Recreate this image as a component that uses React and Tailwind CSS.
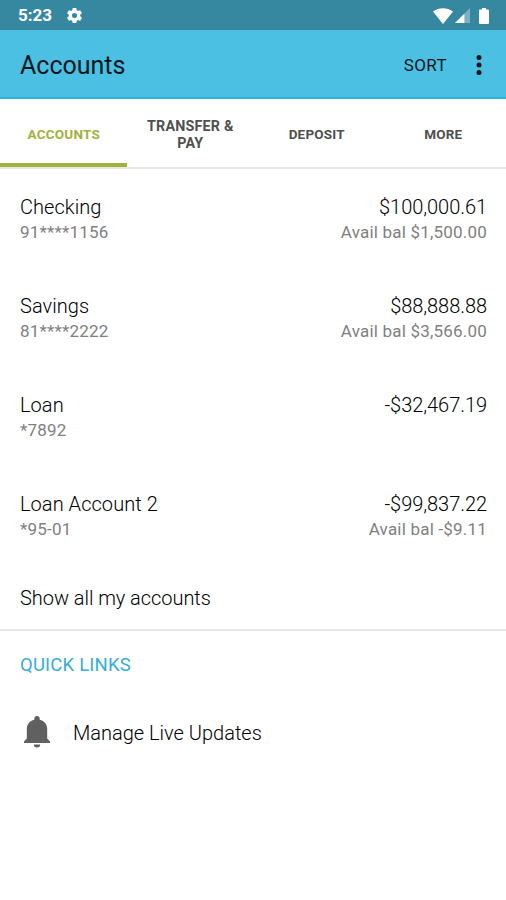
const tabs = [
  { label: 'ACCOUNTS', active: true },
  { label: 'TRANSFER & PAY' },
  { label: 'DEPOSIT' },
  { label: 'MORE' },
]

const accounts = [
  { name: 'Checking', number: '91****1156', balance: '$100,000.61', avail: 'Avail bal $1,500.00' },
  { name: 'Savings', number: '81****2222', balance: '$88,888.88', avail: 'Avail bal $3,566.00' },
  { name: 'Loan', number: '*7892', balance: '-$32,467.19' },
  { name: 'Loan Account 2', number: '*95-01', balance: '-$99,837.22', avail: 'Avail bal -$9.11' },
]

function StatusBar() {
  return (
    <div className="flex h-[30px] items-center bg-[#35889f] pl-[18px] pr-[17px] pt-px text-white">
      <span className="text-[17px] font-bold leading-none">5:23</span>
      <svg viewBox="0 0 24 24" className="ml-[13px] size-[19px]" fill="currentColor">
        <path d="M19.14 12.94c.04-.3.06-.61.06-.94 0-.32-.02-.64-.07-.94l2.03-1.58a.49.49 0 0 0 .12-.61l-1.92-3.32a.49.49 0 0 0-.59-.22l-2.39.96c-.5-.38-1.03-.7-1.62-.94l-.36-2.54a.48.48 0 0 0-.48-.41h-3.84c-.24 0-.43.17-.47.41l-.36 2.54c-.59.24-1.13.57-1.62.94l-2.39-.96a.48.48 0 0 0-.59.22L2.74 8.87a.48.48 0 0 0 .12.61l2.03 1.58c-.05.3-.09.63-.09.94s.02.64.07.94l-2.03 1.58a.49.49 0 0 0-.12.61l1.92 3.32c.12.22.37.29.59.22l2.39-.96c.5.38 1.03.7 1.62.94l.36 2.54c.05.24.24.41.48.41h3.84c.24 0 .44-.17.47-.41l.36-2.54c.59-.24 1.13-.56 1.62-.94l2.39.96c.22.08.47 0 .59-.22l1.92-3.32a.48.48 0 0 0-.12-.61l-2.01-1.58zM12 15.2a3.2 3.2 0 1 1 0-6.4 3.2 3.2 0 0 1 0 6.4z" />
      </svg>
      <svg viewBox="0 0 20 16" className="ml-auto h-4 w-5" fill="currentColor">
        <path d="M0 3.5C5.5-1 14.5-1 20 3.5L10 16z" />
      </svg>
      <svg viewBox="0 0 16 16" className="ml-0.5 size-[15px]" fill="currentColor">
        <path d="M16 0v16H0z" fillOpacity=".35" />
        <path d="M10 6v10H0z" />
      </svg>
      <svg viewBox="0 0 10 16" className="ml-[9px] h-4 w-2.5" fill="currentColor">
        <path d="M3 0h4v1.5h2a1 1 0 0 1 1 1V15a1 1 0 0 1-1 1H1a1 1 0 0 1-1-1V2.5a1 1 0 0 1 1-1h2z" />
      </svg>
    </div>
  )
}

function AccountRow({ account }) {
  return (
    <div className="flex h-[99px] justify-between pl-5 pr-[19px] pt-[26px]">
      <div>
        <p className="text-[20px] leading-[25px] font-light tracking-[0.05px] text-black">{account.name}</p>
        <p className="text-[17px] leading-6 tracking-[0.2px] text-[#808080]">{account.number}</p>
      </div>
      <div className="text-right">
        <p className="text-[20px] leading-[25px] font-light tracking-[-0.05px] text-black">{account.balance}</p>
        <p className="text-[17px] leading-6 tracking-[0.2px] text-[#808080]">{account.avail}</p>
      </div>
    </div>
  )
}

export default function App() {
  return (
    <div className="flex h-[900px] w-[506px] flex-col overflow-hidden bg-white font-[Roboto,sans-serif]">
      <StatusBar />
      <header className="flex h-[69px] items-center border-b-2 border-[#25b8de] bg-[#4bc0e2] pl-5 pr-6 pt-[3px] text-[#04161c]">
        <h1 className="pt-0.5 text-[25px]">Accounts</h1>
        <span className="ml-auto pt-0.5 text-[17px] tracking-[0.4px]">SORT</span>
        <svg viewBox="0 0 6 20" className="ml-[29px] h-5 w-1.5" fill="currentColor">
          <circle cx="3" cy="2.5" r="2.5" />
          <circle cx="3" cy="10" r="2.5" />
          <circle cx="3" cy="17.5" r="2.5" />
        </svg>
      </header>
      <nav className="grid h-[70px] grid-cols-4 border-b-2 border-[#e8e8e8]">
        {tabs.map(tab => (
          <div
            key={tab.label}
            className={`flex items-center justify-center pt-[3px] pr-3.5 pl-[15px] text-center leading-[17px] font-bold tracking-[0.2px] ${tab.label.includes('&') ? 'text-[14.3px]' : 'text-[13.5px]'} ${tab.active ? 'text-[#a1b23c] shadow-[inset_0_-4px_#a1b23c]' : 'text-[#505050]'}`}
          >
            {tab.label}
          </div>
        ))}
      </nav>
      <main>
        {accounts.map(account => (
          <AccountRow key={account.name} account={account} />
        ))}
        <p className="flex h-[66px] items-center border-b-2 border-[#e6e6e6] px-5 pt-0.5 text-[20px] font-light tracking-[-0.05px] text-black">
          Show all my accounts
        </p>
      </main>
      <section className="px-5">
        <h2 className="pt-5 text-[18.5px] leading-7 tracking-[0.2px] text-[#35aed8]">QUICK LINKS</h2>
        <div className="mt-[37px] flex items-center">
          <svg viewBox="0 0 34 32" className="h-8 w-[34px]" fill="#606060">
            <path d="M17 0a2.7 2.7 0 0 1 2.7 2.7v1C24.5 4.8 27.2 8.5 27.2 13v9.5L30 25.5V27H4v-1.5l2.8-3V13c0-4.5 2.7-8.2 7.500-9.300v-1A2.7 2.7 0 0 1 17 0z" />
            <path d="M13.8 28.5h6.4a3.2 3 0 0 1-6.4 0z" />
          </svg>
          <span className="ml-[19px] pt-0.5 text-[20px] font-light text-black">Manage Live Updates</span>
        </div>
      </section>
    </div>
  )
}
